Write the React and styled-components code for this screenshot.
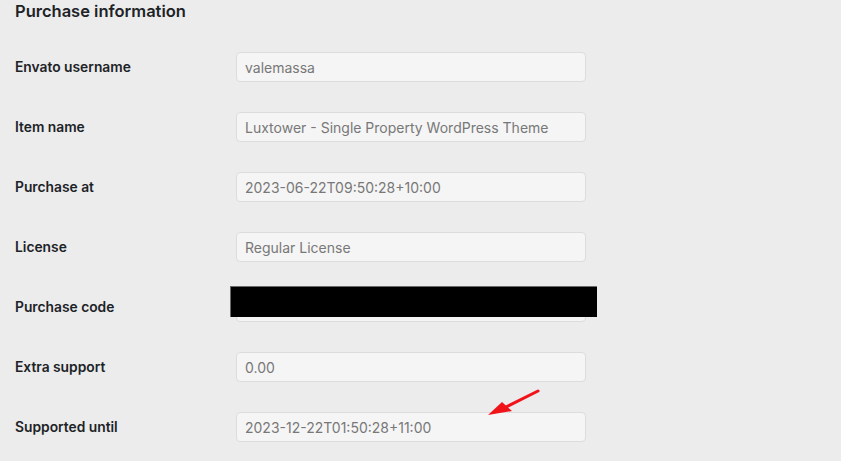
import styled, { createGlobalStyle } from "styled-components";

const GlobalStyle = createGlobalStyle`
    html, body {
        margin: 0;
        padding: 0;
        background: #ececec;
    }
    body {
        font-family: Inter, "Noto Sans", "Liberation Sans", sans-serif;
        color: #1d2327;
    }
`;

const rows = [
    { label: "Envato username", value: "valemassa" },
    { label: "Item name", value: "Luxtower - Single Property WordPress Theme" },
    { label: "Purchase at", value: "2023-06-22T09:50:28+10:00" },
    { label: "License", value: "Regular License" },
    { label: "Purchase code", value: "", hidden: true },
    { label: "Extra support", value: "0.00" },
    { label: "Supported until", value: "2023-12-22T01:50:28+11:00" },
];

function App() {
    return (
        <Page>
            <GlobalStyle />
            <Heading>Purchase information</Heading>
            <Form>
                {rows.map((row) => (
                    <Row key={row.label}>
                        <Label>{row.label}</Label>
                        <Field>
                            <Input readOnly value={row.value} />
                            {row.hidden && <Redact />}
                        </Field>
                    </Row>
                ))}
            </Form>
            <Arrow width="60" height="34" viewBox="0 0 60 34">
                <line x1="56" y1="3" x2="22" y2="20" stroke="#f0141a" strokeWidth="3" strokeLinecap="round" />
                <polygon points="6,27 20,14 30,23" fill="#f0141a" />
            </Arrow>
        </Page>
    );
}

export default App;

const Page = styled.div`
    position: relative;
    width: 841px;
    height: 461px;
    padding: 0 15px;
    box-sizing: border-box;
    overflow: hidden;
`;

const Heading = styled.h2`
    margin: 0 0 15px;
    font-size: 16.5px;
    line-height: 22px;
    font-weight: 600;
`;

const Form = styled.div`
    display: flex;
    flex-direction: column;
`;

const Row = styled.div`
    display: grid;
    grid-template-columns: 221px 350px;
    align-items: center;
    height: 60px;
`;

const Label = styled.label`
    font-size: 13.8px;
    font-weight: 600;
    color: #1d2327;
`;

const Field = styled.div`
    position: relative;
    height: 30px;
`;

const Input = styled.input`
    box-sizing: border-box;
    width: 350px;
    height: 30px;
    padding: 0 8px;
    border: 1px solid #dcdcdc;
    border-radius: 4px;
    background: #f5f5f5;
    font-family: Inter, "Noto Sans", "Liberation Sans", sans-serif;
    font-size: 14px;
    color: #787878;
    outline: none;
`;

const Redact = styled.div`
    position: absolute;
    left: -6px;
    top: -6px;
    width: 367px;
    height: 31px;
    box-sizing: border-box;
    background: #000;
    border-top: 1px solid #6a6a6a;
    border-left: 1px solid #6a6a6a;
`;

const Arrow = styled.svg`
    position: absolute;
    left: 482px;
    top: 388px;
`;
